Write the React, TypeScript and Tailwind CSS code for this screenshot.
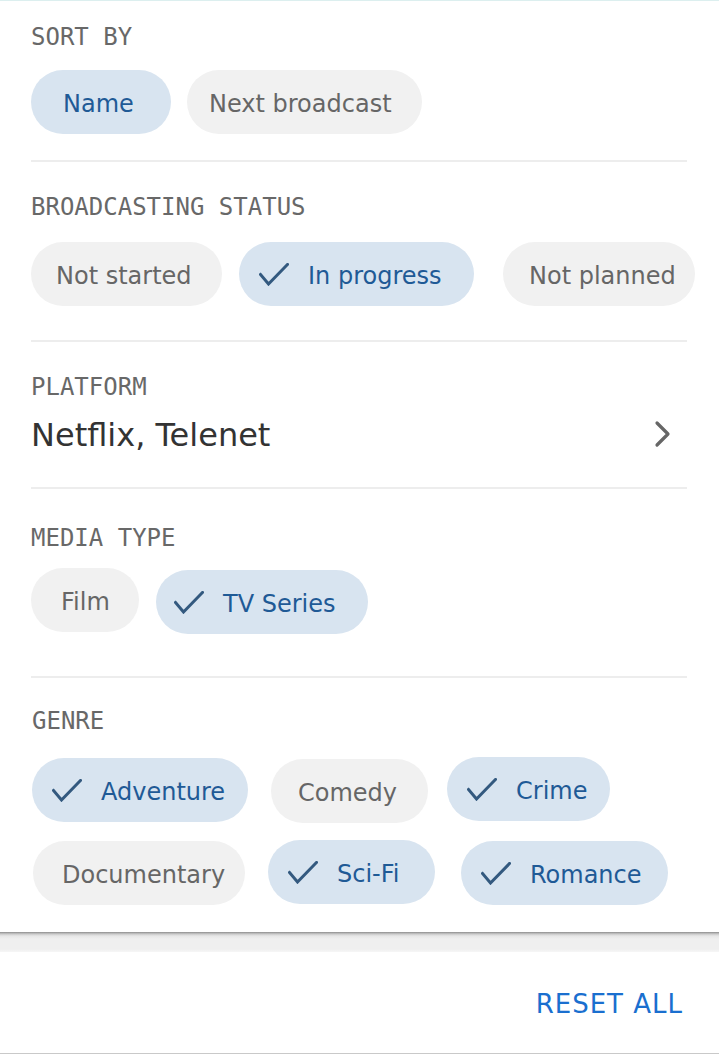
const mono = { fontFamily: '"DejaVu Sans Mono", monospace' };

type ChipProps = {
  label: string;
  selected?: boolean;
  check?: boolean;
  className?: string;
};

const CheckIcon = () => (
  <svg width="30" height="23" viewBox="0 0 30 23" fill="none" className="shrink-0">
    <polyline points="1.5,11.5 9.5,21 28.5,1.5" stroke="#33597f" strokeWidth="3" strokeLinecap="square" />
  </svg>
);

const Chip = ({ label, selected, check = true, className = '' }: ChipProps) => (
  <div
    className={`flex h-16 shrink-0 items-center rounded-full text-[24px] leading-none ${
      selected ? 'bg-[#d8e4f0] text-[#1f5a96]' : 'bg-[#f1f1f1] text-[#666666]'
    } ${selected && check ? 'pl-[20px]' : ''} ${className}`}
  >
    {selected && check && <CheckIcon />}
    <span className={`pt-[3px] ${selected && check ? 'ml-[19px]' : ''}`}>{label}</span>
  </div>
);

const Label = ({ children }: { children: string }) => (
  <p style={mono} className="h-6 text-[24px] leading-none text-[#686868]">
    {children}
  </p>
);

const Divider = () => <div className="mr-[32px] ml-[31px] h-[2px] bg-[#ededed]" />;

export default function App() {
  return (
    <div className="flex h-[1055px] w-[719px] flex-col bg-white" style={{ fontFamily: '"DejaVu Sans", sans-serif' }}>
      <div className="border-t border-[#dcefef]">
        {/* sort */}
        <section className="px-[31px] pt-[24px] pb-[26px]">
          <Label>SORT BY</Label>
          <div className="mt-[21px] flex">
            <Chip label="Name" selected check={false} className="w-[140px] pl-[32px]" />
            <Chip label="Next broadcast" className="ml-[16px] w-[235px] pl-[22px]" />
          </div>
        </section>
        <Divider />

        {/* status */}
        <section className="pt-[33px] pb-[34px] pl-[31px]">
          <Label>BROADCASTING STATUS</Label>
          <div className="mt-[23px] flex">
            <Chip label="Not started" className="w-[191px] pl-[25px]" />
            <Chip label="In progress" selected className="ml-[17px] w-[235px]" />
            <Chip label="Not planned" className="ml-[29px] w-[192px] pl-[26px]" />
          </div>
        </section>
        <Divider />

        {/* platform */}
        <section className="pt-[33px] pr-[45px] pb-[37px] pl-[31px]">
          <Label>PLATFORM</Label>
          <div className="mt-[19px] flex h-8 items-center justify-between">
            <span className="pt-[2px] text-[32px] leading-none text-[#333333]">Netflix, Telenet</span>
            <svg width="20" height="28" viewBox="0 0 20 28" fill="none">
              <polyline points="3,3 14,14 3,25" stroke="#666666" strokeWidth="3.2" strokeLinecap="round" strokeLinejoin="round" />
            </svg>
          </div>
        </section>
        <Divider />

        {/* media type */}
        <section className="pt-[37px] pb-[42px] pl-[31px]">
          <Label>MEDIA TYPE</Label>
          <div className="mt-[18px] flex items-start">
            <Chip label="Film" className="w-[108px] pl-[30px]" />
            <Chip label="TV Series" selected className="mt-[2px] ml-[17px] w-[212px] !pl-[18px]" />
          </div>
        </section>
        <Divider />

        {/* genre */}
        <section className="pt-[31px] pb-[27px] pl-[32px]">
          <Label>GENRE</Label>
          <div className="mt-[25px] flex items-start">
            <Chip label="Adventure" selected className="w-[216px]" />
            <Chip label="Comedy" className="mt-[1px] ml-[23px] w-[157px] pl-[27px]" />
            <Chip label="Crime" selected className="-mt-[1px] ml-[19px] w-[163px]" />
          </div>
          <div className="mt-[18px] flex items-start">
            <Chip label="Documentary" className="ml-[1px] w-[212px] pl-[29px]" />
            <Chip label="Sci-Fi" selected className="-mt-[1px] ml-[23px] w-[167px]" />
            <Chip label="Romance" selected className="ml-[26px] w-[207px]" />
          </div>
        </section>
      </div>

      <div className="h-[20px] bg-[linear-gradient(to_bottom,#8c8c8c_0px,#c9c9c9_2px,#e6e6e6_4px,#efefef_7px,#efefef_17px,#f6f6f6_20px)]" />

      <footer className="flex h-[102px] justify-end border-b border-[#c9c9c9] pt-[39px] pr-[36px]">
        <button className="h-[26px] text-[26px] leading-none tracking-[1px] text-[#1a6fcf]">RESET ALL</button>
      </footer>
    </div>
  );
}
